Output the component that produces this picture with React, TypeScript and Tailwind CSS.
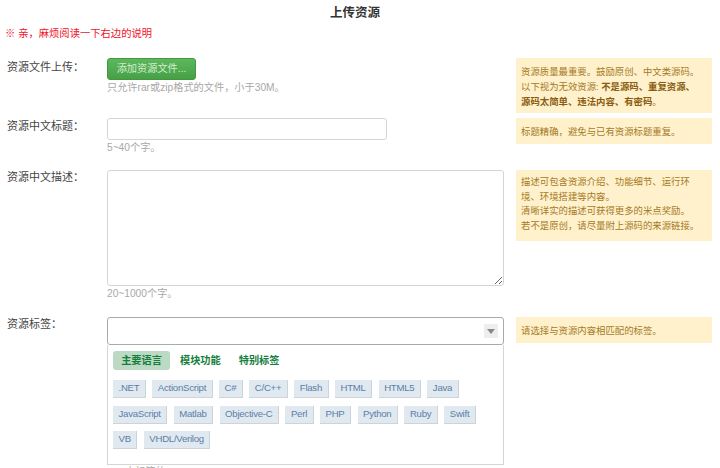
import React from 'react';

const row1 = ['.NET', 'ActionScript', 'C#', 'C/C++', 'Flash', 'HTML', 'HTML5', 'Java'];
const row2 = ['JavaScript', 'Matlab', 'Objective-C', 'Perl', 'PHP', 'Python', 'Ruby', 'Swift'];
const row3 = ['VB', 'VHDL/Verilog'];

const TagRow = ({ tags }: { tags: string[] }) => (
  <div className="flex gap-[6.5px] h-[18px] mb-[7.5px]">
    {tags.map((t) => (
      <span
        key={t}
        className="h-[18px] px-[5.5px] bg-[#e1e9f0] text-[#5b7ea6] text-[9.6px] tracking-[-0.25px] leading-[16px] border-b border-r border-[#ccd3d9] whitespace-nowrap"
      >
        {t}
      </span>
    ))}
  </div>
);

const Tip = ({ children, className = '' }: { children: React.ReactNode; className?: string }) => (
  <div className={`w-[196px] shrink-0 bg-[#fff1cc] text-[#a5791f] text-[9.4px] whitespace-nowrap pl-[5px] ${className}`}>
    {children}
  </div>
);

const Label = ({ children, className = '' }: { children: React.ReactNode; className?: string }) => (
  <div className={`w-[107px] shrink-0 pl-[7px] text-[11px] text-[#444] ${className}`}>{children}</div>
);

export default function App() {
  return (
    <div className="w-[720px] h-[468px] overflow-hidden bg-white font-['Liberation_Sans','Noto_Sans_CJK_SC',sans-serif]">
      <div className="h-[24px] pl-[330px] pt-[5px] text-[12.5px] leading-[16px] font-bold text-[#333]">上传资源</div>
      <div className="h-[34px] pl-[5px] pt-[3px] text-[10.3px] leading-[14px] text-[#f0102a]">※ 亲，麻烦阅读一下右边的说明</div>

      <div className="flex h-[60px]">
        <Label className="leading-[18px]">资源文件上传：</Label>
        <div className="w-[409px] shrink-0">
          <button className="block w-[89px] h-[22px] rounded-[3px] bg-gradient-to-b from-[#5cb85c] to-[#47a047] border border-[#45973f] text-[#d6edd0] text-[10.2px] leading-[20px] text-center">
            添加资源文件...
          </button>
          <div className="mt-[1px] text-[10.2px] leading-[14px] text-[#a8a8a8]">只允许rar或zip格式的文件，小于30M。</div>
        </div>
        <Tip className="h-[55px] pt-[6px] leading-[15px]">
          资源质量最重要。鼓励原创、中文类源码。
          <br />
          以下视为无效资源: <b className="text-[#8a5c10]">不是源码、重复资源、</b>
          <br />
          <b className="text-[#8a5c10]">源码太简单、违法内容、有密码</b>。
        </Tip>
      </div>

      <div className="flex h-[52px]">
        <Label className="leading-[16px]">资源中文标题：</Label>
        <div className="w-[409px] shrink-0">
          <input className="block w-[280px] h-[22px] rounded-[3px] border border-[#d5d5d5] bg-white" />
          <div className="mt-[1px] text-[10.2px] leading-[14px] text-[#a8a8a8]">5~40个字。</div>
        </div>
        <Tip className="h-[26px] pt-[6px] leading-[15px]">标题精确，避免与已有资源标题重复。</Tip>
      </div>

      <div className="flex h-[147px]">
        <Label className="leading-[14px]">资源中文描述：</Label>
        <div className="w-[409px] shrink-0">
          <textarea className="block w-[397px] h-[116px] rounded-[3px] border border-[#d5d5d5] bg-white" />
          <div className="mt-[1px] text-[10.2px] leading-[14px] text-[#a8a8a8]">20~1000个字。</div>
        </div>
        <Tip className="h-[71px] pt-[5px] leading-[14.7px]">
          描述可包含资源介绍、功能细节、运行环
          <br />
          境、环境搭建等内容。
          <br />
          清晰详实的描述可获得更多的米点奖励。
          <br />
          若不是原创，请尽量附上源码的来源链接。
        </Tip>
      </div>

      <div className="flex">
        <Label className="leading-[14px]">资源标签：</Label>
        <div className="w-[409px] shrink-0">
          <div className="w-[397px] h-[28px] rounded-[3px] border border-[#aaa] bg-white flex items-center justify-end pr-[5px]">
            <span className="w-[14px] h-[14px] bg-[#eeeeee] flex items-center justify-center">
              <svg width="8" height="5" viewBox="0 0 8 5">
                <path d="M0 0H8L4 5Z" fill="#888" />
              </svg>
            </span>
          </div>
          <div className="w-[397px] h-[120px] border border-t-0 border-[#d5d5d5] pl-[5px] pt-[6px]">
            <div className="flex items-center text-[10.2px] font-bold text-[#15803d] h-[19px] mb-[10px]">
              <span className="w-[57px] h-[19px] leading-[19px] text-center rounded-[3px] bg-[#bcd9c3]">主要语言</span>
              <span className="ml-[10px]">模块功能</span>
              <span className="ml-[18px]">特别标签</span>
            </div>
            <TagRow tags={row1} />
            <TagRow tags={row2} />
            <TagRow tags={row3} />
          </div>
          <div className="pl-[18px] text-[10.2px] leading-[14px] text-[#a8a8a8]">中标签的</div>
        </div>
        <Tip className="h-[26px] pt-[6px] leading-[15px]">请选择与资源内容相匹配的标签。</Tip>
      </div>
    </div>
  );
}
